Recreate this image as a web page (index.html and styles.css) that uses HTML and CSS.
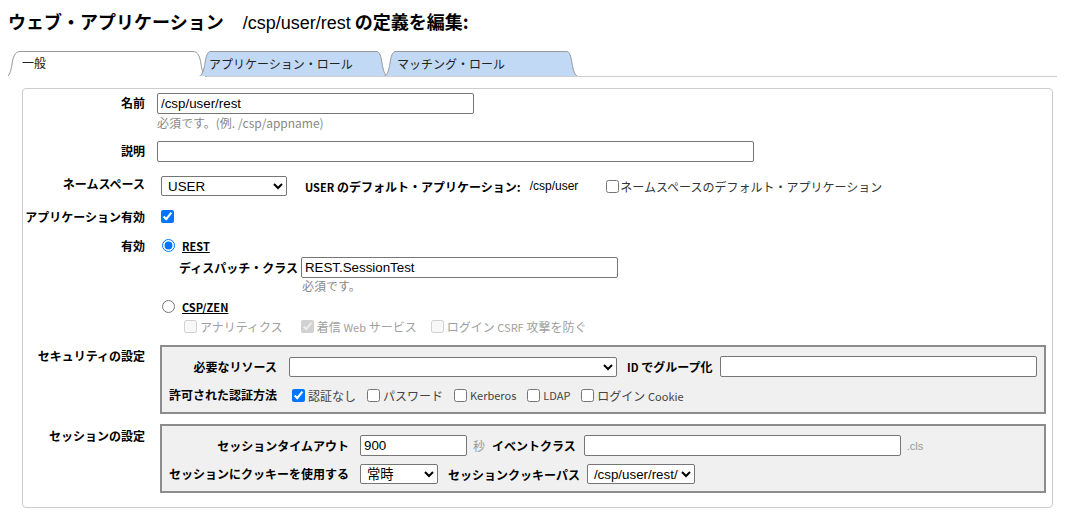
FILE: index.html
```html
<!DOCTYPE html>
<html lang="ja">
<head>
<meta charset="utf-8">
<title>ウェブ・アプリケーション</title>
<link rel="stylesheet" href="styles.css">
</head>
<body>
<h1 class="title">ウェブ・アプリケーション<span class="title-sub"><span class="title-path">/csp/user/rest</span> の定義を編集:</span></h1>

<div class="tabs">
  <div class="tab tab-1">
    <svg class="tab-shape" width="201" height="26" viewBox="0 0 201 26"><path class="tab-fill-white" d="M0,26 C3,26 5,20 6,13 C7,6 9,0 14,0 L187,0 C192,0 194,6 195,13 C196,20 198,26 201,26 Z"/><path class="tab-edge" d="M0.5,26 C3,26 5,20 6,13 C7,6 9,0.5 14,0.5 L187,0.5 C192,0.5 194,6 195,13 C196,20 198,26 200.5,26"/></svg>
    <span class="tab-label">一般</span>
  </div>
  <div class="tab tab-2">
    <svg class="tab-shape" width="189" height="25" viewBox="0 0 189 25"><path class="tab-fill-blue" d="M0,25 C3,25 5,19 6,12 C7,6 8,0 12,0 L177,0 C181,0 182,6 183,12 C184,19 186,25 189,25 Z"/><path class="tab-edge" d="M0.5,25 C3,25 5,19 6,12 C7,6 8,0.5 12,0.5 L177,0.5 C181,0.5 182,6 183,12 C184,19 186,25 188.5,25"/></svg>
    <span class="tab-label">アプリケーション・ロール</span>
  </div>
  <div class="tab tab-3">
    <svg class="tab-shape" width="194" height="25" viewBox="0 0 194 25"><path class="tab-fill-blue" d="M0,25 C3,25 5,19 6,12 C7,6 8,0 12,0 L182,0 C186,0 187,6 188,12 C189,19 191,25 194,25 Z"/><path class="tab-edge" d="M0.5,25 C3,25 5,19 6,12 C7,6 8,0.5 12,0.5 L182,0.5 C186,0.5 187,6 188,12 C189,19 191,25 193.5,25"/></svg>
    <span class="tab-label">マッチング・ロール</span>
  </div>
</div>

<div class="panel">
  <div class="row row-name">
    <div class="lbl">名前</div>
    <div class="cell">
      <input class="txt w317" type="text" value="/csp/user/rest">
      <div class="hint">必須です。(例. /csp/appname)</div>
    </div>
  </div>

  <div class="row row-desc">
    <div class="lbl">説明</div>
    <div class="cell">
      <input class="txt w597" type="text" value="">
    </div>
  </div>

  <div class="row row-ns">
    <div class="lbl">ネームスペース</div>
    <div class="cell cell-ns">
      <select class="sel sel-ns"><option>USER</option></select>
      <span class="ns-default"><span class="latin">USER</span> のデフォルト・アプリケーション:</span>
      <span class="ns-path">/csp/user</span>
      <label class="chk-item ns-check"><input class="box" type="checkbox"><span class="chk-text">ネームスペースのデフォルト・アプリケーション</span></label>
    </div>
  </div>

  <div class="row row-app">
    <div class="lbl">アプリケーション有効</div>
    <div class="cell cell-app">
      <input class="box" type="checkbox" checked>
    </div>
  </div>

  <div class="row row-enabled">
    <div class="lbl">有効</div>
    <div class="cell">
      <div class="opt">
        <input class="radio" type="radio" name="kind" checked>
        <span class="opt-name">REST</span>
      </div>
      <div class="dispatch">
        <span class="dispatch-lbl">ディスパッチ・クラス</span>
        <input class="txt w317" type="text" value="REST.SessionTest">
        <span class="dispatch-hint">必須です。</span>
      </div>
      <div class="opt opt-csp">
        <input class="radio" type="radio" name="kind">
        <span class="opt-name">CSP/ZEN</span>
      </div>
      <div class="subopts">
        <label class="chk-item"><input class="box" type="checkbox" disabled><span>アナリティクス</span></label>
        <label class="chk-item sub-2"><input class="box" type="checkbox" disabled checked><span>着信 <span class="latin">Web</span> サービス</span></label>
        <label class="chk-item sub-3"><input class="box" type="checkbox" disabled><span>ログイン <span class="latin">CSRF</span> 攻撃を防ぐ</span></label>
      </div>
    </div>
  </div>

  <div class="row row-sec">
    <div class="lbl">セキュリティの設定</div>
    <div class="cell">
      <div class="box-group">
        <div class="blbl">必要なリソース</div>
        <div class="bcell">
          <select class="sel sel-res"><option></option></select>
          <span class="inline-lbl gap10"><span class="latin">ID</span> でグループ化</span>
          <input class="txt w317 gap7" type="text" value="">
        </div>
        <div class="blbl">許可された認証方法</div>
        <div class="bcell auth">
          <label class="chk-item auth-item"><input class="box" type="checkbox" checked><span>認証なし</span></label>
          <label class="chk-item auth-item"><input class="box" type="checkbox"><span>パスワード</span></label>
          <label class="chk-item auth-item"><input class="box" type="checkbox"><span class="latin">Kerberos</span></label>
          <label class="chk-item auth-item"><input class="box" type="checkbox"><span class="latin">LDAP</span></label>
          <label class="chk-item auth-item"><input class="box" type="checkbox"><span>ログイン <span class="latin">Cookie</span></span></label>
        </div>
      </div>
    </div>
  </div>

  <div class="row row-sess">
    <div class="lbl">セッションの設定</div>
    <div class="cell">
      <div class="box-group box-sess">
        <div class="blbl">セッションタイムアウト</div>
        <div class="bcell">
          <input class="txt w107" type="text" value="900">
          <span class="unit">秒</span>
          <span class="inline-lbl gap7">イベントクラス</span>
          <input class="txt w317 gap8" type="text" value="">
          <span class="ext">.cls</span>
        </div>
        <div class="blbl">セッションにクッキーを使用する</div>
        <div class="bcell">
          <select class="sel sel-always"><option>常時</option></select>
          <span class="inline-lbl gap10">セッションクッキーパス</span>
          <select class="sel sel-path gap7"><option>/csp/user/rest/</option></select>
        </div>
      </div>
    </div>
  </div>
</div>
</body>
</html>
```

FILE: styles.css
```css
body {
  margin: 8px;
  font-family: "Noto Sans CJK JP", "Liberation Sans", sans-serif;
  font-size: 12px;
  color: #000;
  background: #fff;
}

.title {
  margin: 0;
  height: 26px;
  overflow: hidden;
  font-size: 18px;
  line-height: 26px;
  font-weight: 700;
  white-space: nowrap;
}

.title-sub {
  margin-left: 19px;
}

.title-path {
  font-family: "Liberation Sans", sans-serif;
  font-weight: 400;
}

.latin {
  font-size: 11px;
}

/* tabs */
.tabs {
  display: flex;
  align-items: flex-end;
  height: 25px;
  margin-top: 17px;
  margin-right: -8px;
  border-bottom: 1px solid #cfcfcf;
}

.tab {
  position: relative;
  height: 25px;
  flex: none;
}

.tab-shape {
  position: absolute;
  left: 0;
  top: 0;
  display: block;
}

.tab-fill-white { fill: #fff; }
.tab-fill-blue { fill: #c2d9f6; }
.tab-edge { fill: none; stroke: #999; stroke-width: 1; }

.tab-label {
  position: relative;
  display: block;
  line-height: 25px;
  font-size: 12px;
  color: #222;
  white-space: nowrap;
}

.tab-1 {
  width: 201px;
  height: 26px;
  margin-left: -2px;
  margin-bottom: -1px;
}
.tab-1 .tab-label { padding-left: 16px; line-height: 24px; }

.tab-2 {
  width: 189px;
  margin-left: -8px;
}
.tab-2 .tab-label { padding-left: 10px; }

.tab-3 {
  width: 194px;
  margin-left: -4px;
}
.tab-3 .tab-label { padding-left: 13px; }

/* panel */
.panel {
  box-sizing: border-box;
  width: 1031px;
  height: 420px;
  margin: 11px 0 0 14px;
  padding: 4px 0 13px 0;
  border: 1px solid #cccccc;
  border-radius: 4px;
}

.row {
  display: grid;
  grid-template-columns: 134px 1fr;
  align-items: start;
}

.lbl {
  text-align: right;
  padding-right: 12px;
  font-weight: 700;
  font-size: 12px;
  line-height: 16px;
  white-space: nowrap;
}

.cell {
  min-width: 0;
}

.row-name .lbl { padding-top: 2px; }
.row-desc { margin-top: 10px; }
.row-desc .lbl { padding-top: 2px; }
.row-ns { margin-top: 14px; }
.row-app { margin-top: 10px; }
.row-app .lbl { padding-top: 3px; }
.row-enabled { margin-top: 10px; }
.row-enabled .lbl { padding-top: 2px; }
.row-sec { margin-top: 10px; }
.row-sec .lbl { padding-top: 3px; }
.row-sess { margin-top: 10px; }
.row-sess .lbl { padding-top: 4px; }

/* controls */
.txt {
  box-sizing: border-box;
  height: 21px;
  margin: 0;
  padding: 1px 3px;
  border: 1px solid #767676;
  border-radius: 2px;
  background: #fff;
  color: #000;
  font-family: "Liberation Sans", "Noto Sans CJK JP", sans-serif;
  font-size: 13.33px;
  vertical-align: middle;
}

.w317 { width: 317px; }
.w597 { width: 597px; }
.w107 { width: 107px; }

.sel {
  box-sizing: border-box;
  height: 20px;
  margin: 0;
  padding: 0 0 0 2px;
  border: 1px solid #767676;
  border-radius: 2px;
  background-color: #fff;
  color: #000;
  font-family: "Liberation Sans", "Noto Sans CJK JP", sans-serif;
  font-size: 13.33px;
}

.box,
.radio {
  width: 13px;
  height: 13px;
  margin: 0 3px;
  flex: none;
}

.hint {
  margin-top: 1px;
  line-height: 16px;
  font-size: 12px;
  color: #888;
  white-space: nowrap;
}

/* namespace row */
.cell-ns {
  display: flex;
  align-items: center;
  height: 20px;
  white-space: nowrap;
}

.sel-ns {
  width: 126px;
  margin-left: 4px;
}

.ns-default {
  margin-left: 18px;
  font-weight: 700;
  font-size: 12px;
}

.ns-path {
  margin-left: 9px;
  font-family: "Liberation Sans", sans-serif;
  font-size: 12px;
}

.chk-item {
  display: inline-flex;
  align-items: center;
  white-space: nowrap;
}

.ns-check {
  margin-left: 25px;
  color: #333;
  font-size: 12px;
}
.ns-check .box { margin-right: 1px; }

/* application enabled */
.cell-app {
  display: flex;
  align-items: center;
  height: 20px;
}
.cell-app .box { margin: 1px 0 0 4px; }

/* enabled options */
.opt {
  display: flex;
  align-items: center;
  height: 20px;
}
.opt .radio { margin: 0 0 0 5px; position: relative; top: -1px; }

.opt-name {
  margin-left: 7px;
  font-weight: 700;
  font-size: 11px;
  text-decoration: underline;
  line-height: 20px;
}

.opt-csp { margin-top: 3px; }

.dispatch {
  display: grid;
  grid-template-columns: auto auto;
  justify-content: start;
  align-items: center;
  margin-top: 1px;
  padding-left: 22px;
}

.dispatch-lbl {
  font-weight: 700;
  font-size: 12px;
  line-height: 21px;
  padding-right: 3px;
  white-space: nowrap;
}

.dispatch-hint {
  grid-column: 2;
  padding-left: 1px;
  line-height: 16px;
  color: #888;
}

.subopts {
  display: flex;
  align-items: center;
  height: 18px;
  padding-left: 24px;
  color: #a0a0a0;
  font-size: 12px;
}

.sub-2 { margin-left: 15px; }
.sub-3 { margin-left: 11px; }

/* grouped boxes */
.box-group {
  box-sizing: border-box;
  width: 886px;
  height: 69px;
  margin-left: 3px;
  padding: 9px 8px 7px 0;
  border: 2px solid #8c8c8c;
  background: #f0f0f0;
  display: grid;
  grid-template-columns: auto 1fr;
  grid-template-rows: 21px 20px;
  row-gap: 8px;
  align-items: center;
}

.blbl {
  padding: 0 12px 0 7px;
  text-align: right;
  font-weight: 700;
  font-size: 12px;
  line-height: 16px;
  white-space: nowrap;
}

.box-sess .blbl { padding-right: 11px; }

.bcell {
  display: flex;
  align-items: center;
  white-space: nowrap;
}

.sel-res { width: 328px; }
.sel-always { width: 78px; }
.sel-path { width: 108px; }

.inline-lbl {
  font-weight: 700;
  font-size: 12px;
}

.gap10 { margin-left: 10px; }
.gap7 { margin-left: 7px; }
.gap8 { margin-left: 8px; }

.auth-item {
  color: #444;
  font-size: 12px;
}
.auth-item + .auth-item { margin-left: 8px; }

.unit {
  margin-left: 6px;
  color: #999;
  font-size: 12px;
}

.ext {
  margin-left: 6px;
  color: #999;
  font-family: "Liberation Sans", sans-serif;
  font-size: 11px;
}
```
